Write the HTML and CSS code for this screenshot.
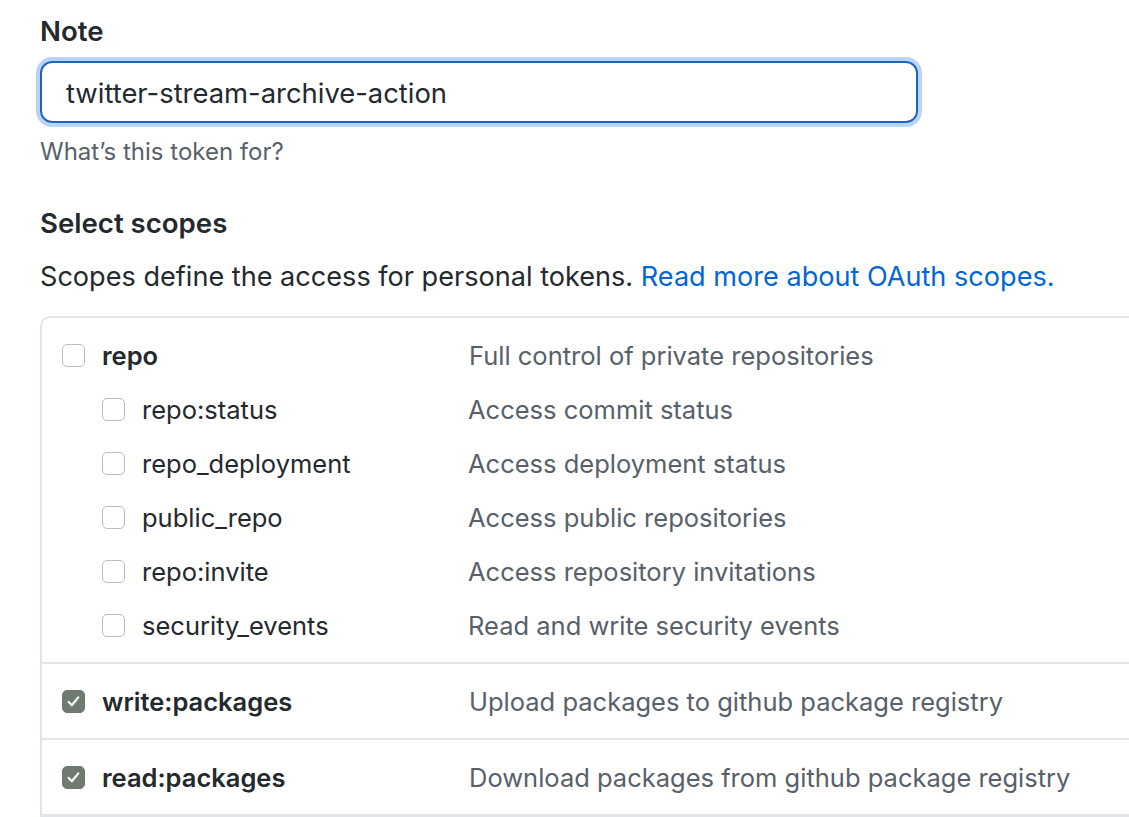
FILE: index.html
```html
<!DOCTYPE html>
<html>
<head>
<meta charset="utf-8">
<link rel="stylesheet" href="styles.css">
</head>
<body>
<div class="page">
  <label class="label">Note</label>
  <div class="input">twitter-stream-archive-action</div>
  <p class="note">What’s this token for?</p>

  <h3 class="heading">Select scopes</h3>
  <p class="intro">Scopes define the access for personal tokens. <a class="link">Read more about OAuth scopes.</a></p>

  <div class="scopes">
    <div class="group">
      <div class="row">
        <span class="cb"></span>
        <span class="name strong">repo</span>
        <span class="desc">Full control of private repositories</span>
      </div>
      <div class="row sub">
        <span class="cb"></span>
        <span class="name">repo:status</span>
        <span class="desc">Access commit status</span>
      </div>
      <div class="row sub">
        <span class="cb"></span>
        <span class="name">repo_deployment</span>
        <span class="desc">Access deployment status</span>
      </div>
      <div class="row sub">
        <span class="cb"></span>
        <span class="name">public_repo</span>
        <span class="desc">Access public repositories</span>
      </div>
      <div class="row sub">
        <span class="cb"></span>
        <span class="name">repo:invite</span>
        <span class="desc">Access repository invitations</span>
      </div>
      <div class="row sub">
        <span class="cb"></span>
        <span class="name">security_events</span>
        <span class="desc">Read and write security events</span>
      </div>
    </div>
    <div class="group">
      <div class="row">
        <span class="cb checked"><svg viewBox="0 0 24 24" width="23" height="23"><path d="M6.5 12.5l3.6 3.8 7.4-9" fill="none" stroke="#fff" stroke-width="2.4" stroke-linecap="round" stroke-linejoin="round"/></svg></span>
        <span class="name strong">write:packages</span>
        <span class="desc">Upload packages to github package registry</span>
      </div>
    </div>
    <div class="group">
      <div class="row">
        <span class="cb checked"><svg viewBox="0 0 24 24" width="23" height="23"><path d="M6.5 12.5l3.6 3.8 7.4-9" fill="none" stroke="#fff" stroke-width="2.4" stroke-linecap="round" stroke-linejoin="round"/></svg></span>
        <span class="name strong">read:packages</span>
        <span class="desc">Download packages from github package registry</span>
      </div>
    </div>
  </div>
</div>
</body>
</html>
```

FILE: styles.css
```css
html, body {
  margin: 0;
  padding: 0;
  background: #fff;
  overflow: hidden;
}
body {
  font-family: Inter, "Liberation Sans", sans-serif;
  color: #24292e;
  font-size: 26px;
}
.page {
  padding: 14px 0 0 40px;
}
.label {
  display: block;
  font-weight: 600;
  font-size: 27.6px;
  line-height: 34px;
  margin-bottom: 13px;
}
.input {
  box-sizing: border-box;
  width: 878px;
  height: 62px;
  border: 2px solid #1f63c0;
  border-radius: 12px;
  box-shadow: 0 0 0 4px #b9d5f5;
  padding: 0 24px;
  display: flex;
  align-items: center;
  font-size: 27.4px;
  padding-top: 2px;
  color: #24292e;
}
.note {
  margin: 13px 0 0;
  font-size: 24px;
  line-height: 32px;
  color: #586069;
}
.heading {
  margin: 38px 0 0;
  font-size: 27.6px;
  font-weight: 600;
  line-height: 34px;
}
.intro {
  margin: 19px 0 0;
  font-size: 27.1px;
  line-height: 36px;
}
.link {
  color: #0366d6;
}
.scopes {
  margin-top: 21px;
  width: 1140px;
  border: 2px solid #e1e4e8;
  border-right: none;
  border-radius: 10px 0 0 0;
}
.group {
  padding: 10px 0;
  border-bottom: 2px solid #e1e4e8;
}
.row {
  display: flex;
  align-items: center;
  height: 54px;
  padding-left: 20px;
  font-size: 25.5px;
}
.row.sub {
  padding-left: 60px;
}
.cb {
  box-sizing: border-box;
  width: 23px;
  height: 23px;
  border: 1.5px solid #bdbdbd;
  border-radius: 5px;
  background: #fff;
  flex: none;
  display: flex;
  align-items: center;
  justify-content: center;
}
.cb.checked {
  background: #6f7b70;
  border-color: #6f7b70;
}
.cb svg {
  display: block;
}
.name {
  margin-left: 17px;
  width: 367px;
  flex: none;
}
.row.sub .name {
  width: 326px;
}
.strong {
  font-weight: 600;
}
.desc {
  color: #586069;
}
```
